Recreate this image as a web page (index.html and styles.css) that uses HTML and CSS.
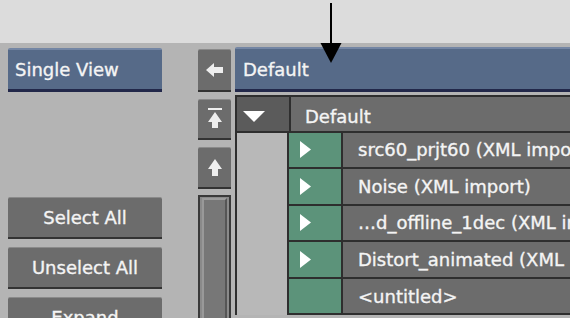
FILE: index.html
```html
<!DOCTYPE html>
<html>
<head>
<meta charset="utf-8">
<link rel="stylesheet" href="styles.css">
</head>
<body>
<div class="pointer">
  <svg width="24" height="64" viewBox="0 0 24 64"><rect x="10" y="3" width="2" height="42" fill="#000"/><polygon points="0.5,43 21.5,43 11,63" fill="#000"/></svg>
</div>
<div class="top"></div>
<div class="panel">
  <div class="left">
    <div class="btn blue">Single View</div>
    <div class="btn gray first">Select All</div>
    <div class="btn gray">Unselect All</div>
    <div class="btn gray">Expand</div>
  </div>
  <div class="mid">
    <div class="sbtn back">
      <svg width="18" height="14" viewBox="0 0 18 14"><polygon points="0,7 8,0 8,4 17,4 17,10 8,10 8,14" fill="#eee"/></svg>
    </div>
    <div class="sbtn jump">
      <svg width="16" height="22" viewBox="0 0 16 22"><rect x="1" y="0" width="14" height="2" fill="#eee"/><polygon points="8,4 15,14 11,14 11,20 5,20 5,14 1,14" fill="#eee"/></svg>
    </div>
    <div class="sbtn up">
      <svg width="16" height="18" viewBox="0 0 16 18"><polygon points="8,0 15,10 11,10 11,17 5,17 5,10 1,10" fill="#eee"/></svg>
    </div>
    <div class="track"><div class="thumb"></div></div>
  </div>
  <div class="right">
    <div class="bar">Default</div>
    <div class="tree">
      <div class="row head">
        <div class="c1"><svg width="22" height="11" viewBox="0 0 22 11"><polygon points="0,0 22,0 11,11" fill="#fff"/></svg></div>
        <div class="c3 htext">Default</div>
      </div>
      <div class="row">
        <div class="c0"></div>
        <div class="c2"><svg width="11" height="17" viewBox="0 0 11 17"><polygon points="0,0 11,8.5 0,17" fill="#fff"/></svg></div>
        <div class="c3">src60_prjt60 (XML import)</div>
      </div>
      <div class="row">
        <div class="c0"></div>
        <div class="c2"><svg width="11" height="17" viewBox="0 0 11 17"><polygon points="0,0 11,8.5 0,17" fill="#fff"/></svg></div>
        <div class="c3">Noise (XML import)</div>
      </div>
      <div class="row">
        <div class="c0"></div>
        <div class="c2"><svg width="11" height="17" viewBox="0 0 11 17"><polygon points="0,0 11,8.5 0,17" fill="#fff"/></svg></div>
        <div class="c3">…d_offline_1dec (XML import)</div>
      </div>
      <div class="row">
        <div class="c0"></div>
        <div class="c2"><svg width="11" height="17" viewBox="0 0 11 17"><polygon points="0,0 11,8.5 0,17" fill="#fff"/></svg></div>
        <div class="c3">Distort_animated (XML import)</div>
      </div>
      <div class="row">
        <div class="c0"></div>
        <div class="c2"></div>
        <div class="c3">&lt;untitled&gt;</div>
      </div>
    </div>
  </div>
</div>
</body>
</html>
```

FILE: styles.css
```css
* { box-sizing: border-box; }
html, body {
  margin: 0;
  padding: 0;
  width: 570px;
  height: 318px;
  overflow: hidden;
  background: #dcdcdc;
  font-family: "DejaVu Sans", sans-serif;
  font-size: 18px;
  color: #f4f4f4;
  -webkit-text-stroke: 0.35px #f4f4f4;
}
body { position: relative; }
.pointer {
  position: absolute;
  left: 320px;
  top: 0;
  z-index: 5;
  line-height: 0;
}
.top { height: 43px; }
.panel {
  height: 275px;
  background: #b4b4b4;
  display: flex;
  padding-left: 8px;
  overflow: hidden;
}
.left {
  width: 154px;
  flex: none;
  display: flex;
  flex-direction: column;
  gap: 8px;
  padding-top: 5px;
}
.btn {
  height: 44px;
  flex: none;
  display: flex;
  align-items: center;
  white-space: nowrap;
  border-radius: 2px 2px 0 0;
}
.blue {
  background: #566a88;
  border-top: 2px solid #7486a4;
  border-bottom: 3px solid #22284a;
  padding-left: 7px;
}
.gray {
  height: 42px;
  background: #6c6c6c;
  border-top: 1px solid #8a8a8a;
  border-bottom: 2px solid #333;
  justify-content: center;
}
.first { margin-top: 97px; }
.mid {
  width: 33px;
  flex: none;
  margin-left: 36px;
  display: flex;
  flex-direction: column;
  padding-top: 6px;
}
.sbtn {
  height: 43px;
  flex: none;
  background: #6c6c6c;
  border-top: 1px solid #8a8a8a;
  border-bottom: 2px solid #333;
  border-radius: 2px 2px 0 0;
  display: flex;
  align-items: center;
  justify-content: center;
  line-height: 0;
}
.jump { margin-top: 7px; height: 41px; }
.up { margin-top: 7px; height: 42px; }
.track {
  margin-top: 6px;
  flex: 1;
  border: 2px solid #3a3a3a;
  border-bottom: none;
  background: #8a8a8a;
  padding: 1px 2px 0 2px;
}
.thumb {
  height: 100%;
  background: #777;
  border-top: 2px solid #9c9c9c;
  border-left: 2px solid #999;
  border-right: 2px solid #555;
}
.right {
  flex: 1;
  min-width: 0;
  margin-left: 4px;
  display: flex;
  flex-direction: column;
  padding-top: 4px;
}
.bar {
  height: 45px;
  flex: none;
  background: #566a88;
  border-top: 2px solid #7486a4;
  border-bottom: 3px solid #22284a;
  border-radius: 2px 0 0 0;
  padding-left: 8px;
  display: flex;
  align-items: center;
}
.tree {
  margin-top: 3px;
  border-left: 2px solid #2e2e2e;
  border-top: 2px solid #2e2e2e;
  display: flex;
  flex-direction: column;
}
.row {
  height: 36.6px;
  flex: none;
  display: flex;
  border-bottom: 2px solid #2e2e2e;
  white-space: nowrap;
}
.head { height: 35.5px; }
.c0 {
  width: 52px;
  flex: none;
  background: #b8b8b8;
  border-right: 2px solid #2e2e2e;
  margin-bottom: -2px;
}
.c1 {
  width: 54px;
  flex: none;
  background: #5b5b5b;
  border-right: 2px solid #2e2e2e;
  padding: 14px 0 0 6px;
  line-height: 0;
}
.c2 {
  width: 54px;
  flex: none;
  background: #5c937a;
  border-right: 2px solid #2e2e2e;
  padding: 0 0 0 11px;
  display: flex;
  align-items: center;
  line-height: 0;
}
.c3 {
  flex: 1;
  min-width: 0;
  background: #6c6c6c;
  padding-left: 15px;
  display: flex;
  align-items: center;
  overflow: hidden;
}
.htext { padding: 5px 0 0 14px; }
```
